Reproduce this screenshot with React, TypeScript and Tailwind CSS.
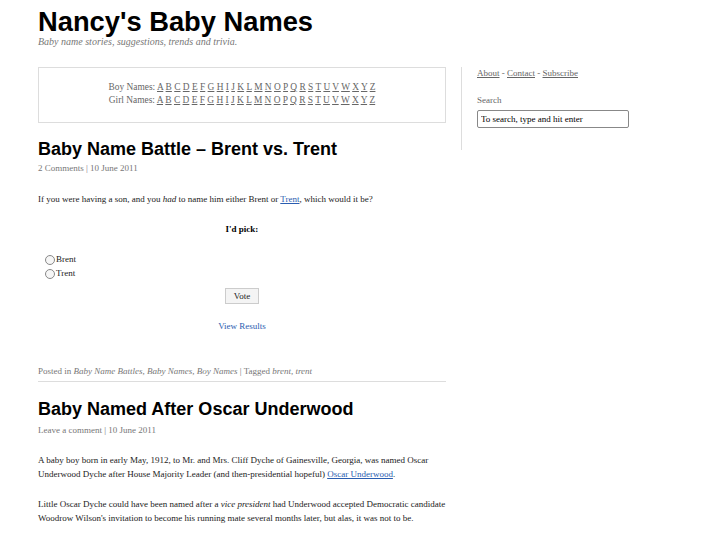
const letters = 'ABCDEFGHIJKLMNOPQRSTUVWXYZ'.split('');

function LetterRow({ label }: { label: string }) {
  return (
    <p>
      {label}:{' '}
      {letters.map((l) => (
        <span key={l}>
          <a href="#" className="underline">{l}</a>{' '}
        </span>
      ))}
    </p>
  );
}

function Radio({ label }: { label: string }) {
  return (
    <label className="flex h-[14px] items-center gap-[1px]">
      <span className="inline-block h-[10px] w-[10px] rounded-full border border-[#888] bg-[#f6f6f6]" />
      {label}
    </label>
  );
}

export default function App() {
  return (
    <div className="min-h-[545px] bg-white font-['Liberation_Serif',serif] text-[9px] text-[#222]">
      <div className="pl-[38px] pr-[38px]">
        <header className="pt-[6px]">
          <h1 className="font-['Liberation_Sans',Arial,sans-serif] text-[27.3px] font-bold leading-[32px] text-black">
            Nancy's Baby Names
          </h1>
          <p className="mt-[-2px] text-[10px] italic leading-[12px] text-[#777]">
            Baby name stories, suggestions, trends and trivia.
          </p>
        </header>

        <div className="mt-[19px] flex">
          <main className="w-[408px] shrink-0">
            <div className="border border-[#ddd] pt-[13px] pb-[15px] text-center text-[9.4px] leading-[13px] text-[#666]">
              <LetterRow label="Boy Names" />
              <LetterRow label="Girl Names" />
            </div>

            <article className="pt-[15px]">
              <h2 className="font-['Liberation_Sans',Arial,sans-serif] text-[18px] font-bold leading-[22px] text-black">
                Baby Name Battle – Brent vs. Trent
              </h2>
              <p className="mt-[2px] text-[#777]">2 Comments | 10 June 2011</p>
              <p className="mt-[17px] text-[#222]">
                If you were having a son, and you <em>had</em> to name him either Brent or{' '}
                <a href="#" className="text-[#2a5db0] underline">Trent</a>, which would it be?
              </p>
              <div className="mt-[17px]">
                <p className="text-center font-bold text-black">I'd pick:</p>
                <div className="mt-[16px] flex flex-col pl-[7px]">
                  <Radio label="Brent" />
                  <Radio label="Trent" />
                </div>
                <div className="mt-[7px] flex justify-center">
                  <button className="h-[16px] border border-[#ccc] bg-[#f4f4f4] px-[8px] text-[9px] leading-[12px] text-[#222]">
                    Vote
                  </button>
                </div>
                <p className="mt-[16px] text-center text-[#2a5db0]">View Results</p>
              </div>
              <p className="mt-[32px] border-b border-[#ddd] pb-[2px] text-[#777]">
                Posted in <em>Baby Name Battles</em>, <em>Baby Names</em>, <em>Boy Names</em> | Tagged <em>brent</em>, <em>trent</em>
              </p>
            </article>

            <article className="pt-[16px]">
              <h2 className="font-['Liberation_Sans',Arial,sans-serif] text-[18px] font-bold leading-[22px] text-black">
                Baby Named After Oscar Underwood
              </h2>
              <p className="mt-[4px] text-[#777]">Leave a comment | 10 June 2011</p>
              <p className="mt-[16px] leading-[14px] text-[#222]">
                A baby boy born in early May, 1912, to Mr. and Mrs. Cliff Dyche of Gainesville, Georgia, was named Oscar
                Underwood Dyche after House Majority Leader (and then-presidential hopeful){' '}
                <a href="#" className="text-[#2a5db0] underline">Oscar Underwood</a>.
              </p>
              <p className="mt-[16px] leading-[14px] text-[#222]">
                Little Oscar Dyche could have been named after a <em>vice president</em> had Underwood accepted Democratic
                candidate Woodrow Wilson's invitation to become his running mate several months later, but alas, it was not to be.
              </p>
            </article>
          </main>

          <div className="ml-[15px] h-[83px] w-px bg-[#ddd]" />

          <aside className="ml-[15px] flex-1 text-[9px] text-[#666]">
            <p>
              <a href="#" className="underline">About</a> - <a href="#" className="underline">Contact</a> -{' '}
              <a href="#" className="underline">Subscribe</a>
            </p>
            <p className="mt-[13px]">Search</p>
            <input
              readOnly
              value="To search, type and hit enter"
              className="mt-[3px] h-[18px] w-[152px] rounded-[2px] border border-[#888] px-[3px] text-[9px] text-black outline-none"
            />
          </aside>
        </div>
      </div>
    </div>
  );
}
